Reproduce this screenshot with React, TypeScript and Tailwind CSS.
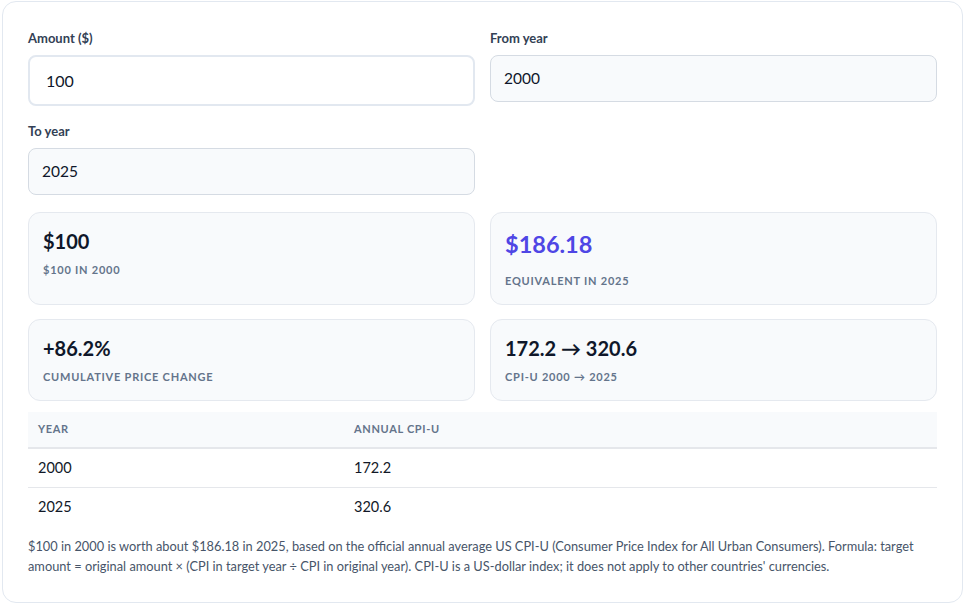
import React from "react";

const font = { fontFamily: "Lato, 'Noto Sans', sans-serif" };

function Field({ label, value, focused }: { label: string; value: string; focused?: boolean }) {
  return (
    <div className="flex flex-col">
      <label className="text-[13px] leading-[16px] font-bold text-[#334155] mb-[9px]">{label}</label>
      {focused ? (
        <div className="h-[51px] rounded-[8px] border-2 border-[#e2e8f0] bg-white flex items-center pl-[16px] text-[16px] text-[#0f172a]">
          {value}
        </div>
      ) : (
        <div className="h-[47px] rounded-[8px] border border-[#d5dbe3] bg-[#f8fafc] flex items-center pl-[13px] text-[15.5px] text-[#0f172a]">
          {value}
        </div>
      )}
    </div>
  );
}

function Stat({ value, label, big }: { value: string; label: string; big?: boolean }) {
  return (
    <div className="rounded-[12px] border border-[#e5e9ef] bg-[#f8fafc] px-[14px] pt-[14px] pb-[15px]">
      {big ? (
        <div className="text-[23.5px] leading-[32px] font-bold text-[#4f46e5] pt-[1px] mb-[13px]">{value}</div>
      ) : (
        <div className="text-[20px] leading-[28px] font-bold text-[#0f172a] mb-[7px]">{value}</div>
      )}
      <div className="text-[11px] leading-[16px] font-bold tracking-[0.07em] uppercase text-[#64748b]">{label}</div>
    </div>
  );
}

export default function App() {
  return (
    <div className="w-[966px] h-[605px] bg-white pl-[2px] pt-[1px]" style={font}>
      <div className="w-[961px] h-[602px] rounded-[14px] border border-[#e2e8f0] bg-white px-[25px] pt-[28px]">
        <div className="grid grid-cols-2 gap-x-[15px] gap-y-[17px]">
          <Field label="Amount ($)" value="100" focused />
          <Field label="From year" value="2000" />
          <Field label="To year" value="2025" />
          <div />
        </div>
        <div className="grid grid-cols-2 gap-x-[15px] gap-y-[14px] mt-[17px]">
          <Stat value="$100" label="$100 in 2000" />
          <Stat value="$186.18" label="Equivalent in 2025" big />
          <Stat value="+86.2%" label="Cumulative price change" />
          <Stat value="172.2 → 320.6" label="CPI-U 2000 → 2025" />
        </div>
        <table className="w-full mt-[11px] border-collapse">
          <thead>
            <tr className="bg-[#f8fafc] border-b-2 border-[#e5e7eb]">
              <th className="h-[36px] w-[326px] text-left pl-[10px] text-[11px] font-bold tracking-[0.06em] text-[#64748b]">YEAR</th>
              <th className="h-[36px] text-left text-[11px] font-bold tracking-[0.06em] text-[#64748b]">ANNUAL CPI-U</th>
            </tr>
          </thead>
          <tbody>
            <tr className="border-b border-[#e5e7eb]">
              <td className="h-[39px] pl-[10px] text-[14.5px] text-[#111827]">2000</td>
              <td className="h-[39px] text-[14.5px] text-[#111827]">172.2</td>
            </tr>
            <tr>
              <td className="h-[40px] pl-[10px] text-[14.5px] text-[#111827]">2025</td>
              <td className="h-[40px] text-[14.5px] text-[#111827]">320.6</td>
            </tr>
          </tbody>
        </table>
        <p className="mt-[9px] text-[12.8px] leading-[20px] text-[#475569]">
          $100 in 2000 is worth about $186.18 in 2025, based on the official annual average US CPI-U (Consumer Price Index for All Urban Consumers). Formula: target amount = original amount × (CPI in target year ÷ CPI in original year). CPI-U is a US-dollar index; it does not apply to other countries' currencies.
        </p>
      </div>
    </div>
  );
}
